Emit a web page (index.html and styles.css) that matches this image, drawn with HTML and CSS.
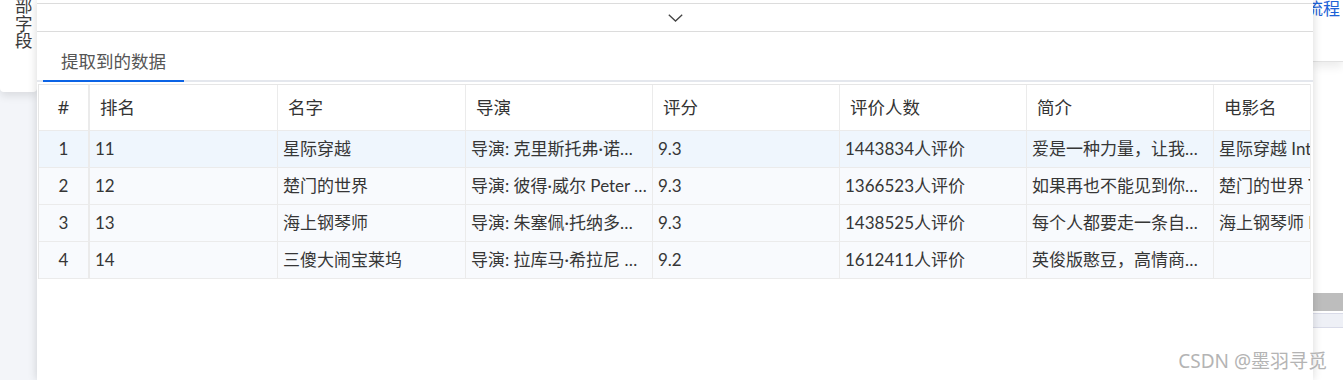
FILE: index.html
```html
<!DOCTYPE html>
<html lang="zh-CN">
<head>
<meta charset="utf-8">
<title>提取到的数据</title>
<link rel="stylesheet" href="styles.css">
</head>
<body>
<div class="app">
  <aside class="side-left">
    <div class="field-card">
      <div class="vtext"><span>部</span><span>字</span><span>段</span></div>
    </div>
  </aside>

  <main class="panel">
    <div class="toggle-bar">
      <svg class="chevron" width="15" height="8" viewBox="0 0 15 8" aria-hidden="true">
        <polyline points="0.8,0.8 7.5,7 14.2,0.8" fill="none" stroke="#444" stroke-width="1.3"/>
      </svg>
    </div>
    <div class="tabs">
      <div class="tab active">提取到的数据</div>
    </div>
    <div class="table-wrap">
      <table class="data-table">
        <thead>
          <tr>
            <th class="c-idx">#</th>
            <th class="w188">排名</th>
            <th class="w188">名字</th>
            <th class="w187">导演</th>
            <th class="w187">评分</th>
            <th class="w187">评价人数</th>
            <th class="w187">简介</th>
            <th class="w187">电影名</th>
          </tr>
        </thead>
        <tbody>
          <tr class="row-hover">
            <td class="c-idx">1</td>
            <td>11</td>
            <td>星际穿越</td>
            <td>导演: 克里斯托弗·诺兰 Christopher Nolan</td>
            <td>9.3</td>
            <td>1443834人评价</td>
            <td>爱是一种力量，让我们超越时空感知它的存在。</td>
            <td>星际穿越 Interstellar</td>
          </tr>
          <tr>
            <td class="c-idx">2</td>
            <td>12</td>
            <td>楚门的世界</td>
            <td>导演: 彼得·威尔 Peter Weir</td>
            <td>9.3</td>
            <td>1366523人评价</td>
            <td>如果再也不能见到你，祝你早安，午安，晚安。</td>
            <td>楚门的世界 The Truman Show</td>
          </tr>
          <tr>
            <td class="c-idx">3</td>
            <td>13</td>
            <td>海上钢琴师</td>
            <td>导演: 朱塞佩·托纳多雷 Giuseppe Tornatore</td>
            <td>9.3</td>
            <td>1438525人评价</td>
            <td>每个人都要走一条自己坚定了的路，就算是粉身碎骨。</td>
            <td>海上钢琴师 La leggenda del pianista sull'oceano</td>
          </tr>
          <tr>
            <td class="c-idx">4</td>
            <td>14</td>
            <td>三傻大闹宝莱坞</td>
            <td>导演: 拉库马·希拉尼 Rajkumar Hirani</td>
            <td>9.2</td>
            <td>1612411人评价</td>
            <td>英俊版憨豆，高情商版谢耳朵。</td>
            <td></td>
          </tr>
        </tbody>
      </table>
    </div>
  </main>

  <aside class="side-right">
    <div class="flow-card"><span class="flow-link">流程</span></div>
    <div class="scroll-thumb"></div>
    <div class="scroll-band"></div>
  </aside>

  <div class="watermark">CSDN @墨羽寻觅</div>
</div>
</body>
</html>
```

FILE: styles.css
```css
* {
  box-sizing: border-box;
}

html,
body {
  margin: 0;
  padding: 0;
}

body {
  background: #f3f5f9;
  font-family: "Noto Sans", "Noto Sans CJK SC", sans-serif;
  color: #333;
  overflow: hidden;
}

.app {
  position: relative;
  display: grid;
  grid-template-columns: 37px 1276px 30px;
  height: 380px;
  overflow: hidden;
}

/* left field card */
.side-left {
  background: #f3f5f9;
}

.field-card {
  height: 92px;
  background: #fff;
  border-radius: 0 0 4px 4px;
  box-shadow: 0 4px 8px rgba(0, 0, 0, 0.10);
  padding-left: 15px;
  overflow: hidden;
}

.vtext {
  display: flex;
  flex-direction: column;
  margin-top: -3px;
  font-size: 17.5px;
  line-height: 17.5px;
  color: #3a3a3a;
}

/* main panel */
.panel {
  position: relative;
  z-index: 1;
  display: flex;
  flex-direction: column;
  background: #fff;
  box-shadow: 0 0 9px rgba(0, 0, 0, 0.16);
  overflow: hidden;
}

.toggle-bar {
  margin-top: 3px;
  height: 29px;
  border-top: 1px solid #dcdcdc;
  border-bottom: 1px solid #dcdcdc;
  display: flex;
  align-items: center;
  justify-content: center;
}

.chevron {
  display: block;
  margin-top: 1px;
}

.tabs {
  display: flex;
  padding: 10px 0 0 6px;
  border-bottom: 2px solid #e4e7ed;
}

.tab {
  height: 40px;
  margin-bottom: -2px;
  padding: 0 18px;
  line-height: 38px;
  font-size: 17.5px;
  color: #555;
  border-bottom: 2px solid transparent;
}

.tab.active {
  border-bottom-color: #0b63e5;
}

.table-wrap {
  margin: 2px 2px 0 1px;
  overflow: hidden;
  border-right: 1px solid #ededed;
}

.data-table {
  width: 1363px;
  table-layout: fixed;
  border-collapse: separate;
  border-spacing: 0;
  border-top: 1px solid #e6e6e6;
  border-left: 1px solid #e6e6e6;
}

.data-table th,
.data-table td {
  box-sizing: border-box;
  padding: 0 5px;
  border-right: 1px solid #ebebeb;
  border-bottom: 1px solid #ebebeb;
  white-space: nowrap;
  overflow: hidden;
  text-overflow: ellipsis;
  text-align: left;
  font-weight: normal;
}

.data-table th {
  padding-left: 10px;
  line-height: 45px;
  font-size: 17.5px;
  color: #333;
  background: #fff;
}

.data-table td {
  line-height: 36px;
  font-family: "Lato", "Noto Sans CJK SC", sans-serif;
  font-size: 17px;
  color: #363636;
  background: #f8fafd;
}

.data-table tr.row-hover td {
  background: #eff6fd;
}

.data-table .c-idx {
  width: 51px;
  padding: 0;
  text-align: center;
  border-right-width: 2px;
}

.data-table .w188 {
  width: 188px;
}

.data-table .w187 {
  width: 187px;
}

/* right side */
.side-right {
  display: flex;
  flex-direction: column;
  background: #fff;
  overflow: hidden;
}

.flow-card {
  height: 62px;
  background: #fff;
  border-bottom: 1px solid #e2e2e2;
  box-shadow: 0 5px 10px rgba(0, 0, 0, 0.08);
}

.flow-link {
  display: block;
  margin-left: -7px;
  white-space: nowrap;
  font-size: 17px;
  line-height: 17px;
  color: #1d62d6;
}

.scroll-thumb {
  margin-top: 231px;
  height: 18px;
  background: #bdbdbd;
}

.scroll-band {
  margin-top: 2px;
  height: 15px;
  background: #eef0f6;
  border-top: 1px solid #d9dbe8;
  border-bottom: 1px solid #d9dbe8;
}

.watermark {
  position: absolute;
  right: 16px;
  bottom: 8px;
  z-index: 2;
  font-size: 19px;
  line-height: 22px;
  color: #b4b4b4;
  white-space: nowrap;
}
```
